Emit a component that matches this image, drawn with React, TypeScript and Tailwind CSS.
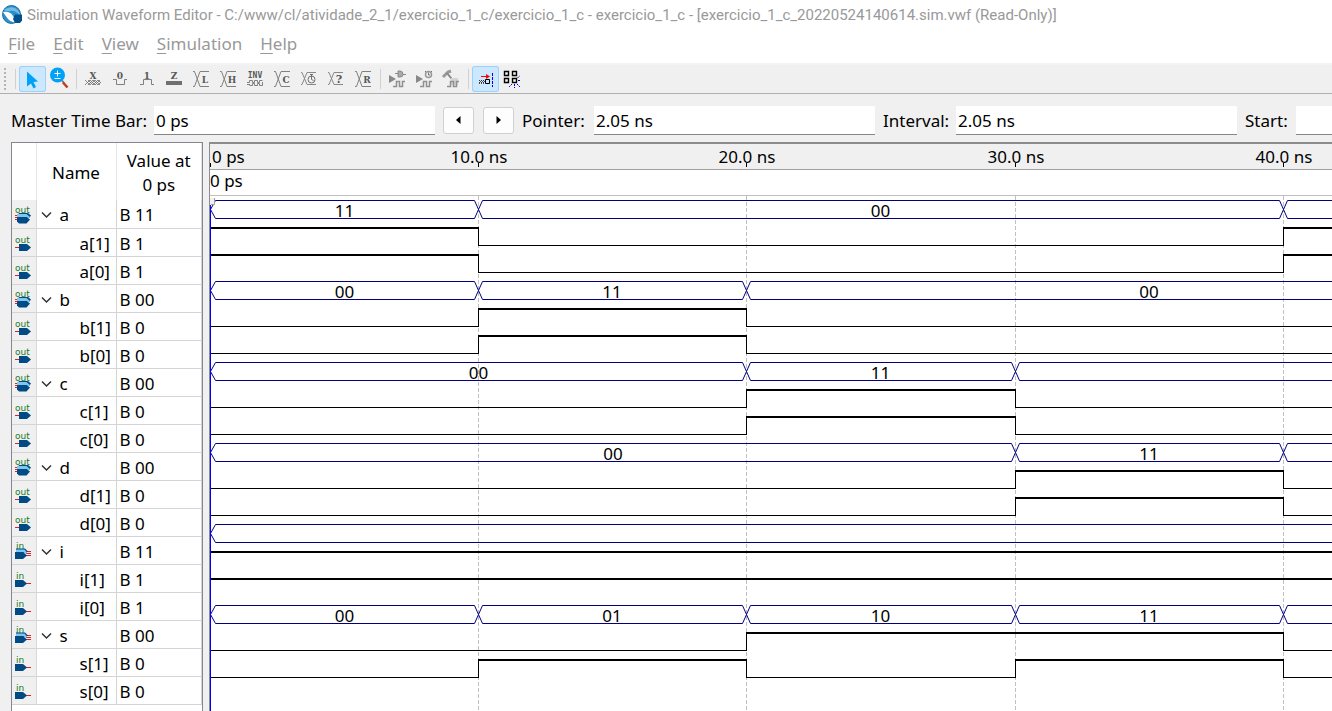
import type { ReactNode } from "react";

type Kind = "out-bus" | "out" | "in-bus" | "in";

type Segment = { to: number; value: string };

type Signal = {
  name: string;
  value: string;
  kind: Kind;
  segments: Segment[];
};

// Pixel position of every 10 ns mark, counted from the left edge of the canvas.
const MARKS = [1, 268, 536, 805, 1073];
const END = 4000;

const SIGNALS: Signal[] = [
  { name: "a", value: "B 11", kind: "out-bus", segments: [{ to: 268, value: "11" }, { to: 1073, value: "00" }, { to: END, value: "11" }] },
  { name: "a[1]", value: "B 1", kind: "out", segments: [{ to: 268, value: "1" }, { to: 1073, value: "0" }, { to: END, value: "1" }] },
  { name: "a[0]", value: "B 1", kind: "out", segments: [{ to: 268, value: "1" }, { to: 1073, value: "0" }, { to: END, value: "1" }] },
  { name: "b", value: "B 00", kind: "out-bus", segments: [{ to: 268, value: "00" }, { to: 536, value: "11" }, { to: 1342, value: "00" }, { to: END, value: "11" }] },
  { name: "b[1]", value: "B 0", kind: "out", segments: [{ to: 268, value: "0" }, { to: 536, value: "1" }, { to: END, value: "0" }] },
  { name: "b[0]", value: "B 0", kind: "out", segments: [{ to: 268, value: "0" }, { to: 536, value: "1" }, { to: END, value: "0" }] },
  { name: "c", value: "B 00", kind: "out-bus", segments: [{ to: 536, value: "00" }, { to: 805, value: "11" }, { to: END, value: "00" }] },
  { name: "c[1]", value: "B 0", kind: "out", segments: [{ to: 536, value: "0" }, { to: 805, value: "1" }, { to: END, value: "0" }] },
  { name: "c[0]", value: "B 0", kind: "out", segments: [{ to: 536, value: "0" }, { to: 805, value: "1" }, { to: END, value: "0" }] },
  { name: "d", value: "B 00", kind: "out-bus", segments: [{ to: 805, value: "00" }, { to: 1073, value: "11" }, { to: END, value: "00" }] },
  { name: "d[1]", value: "B 0", kind: "out", segments: [{ to: 805, value: "0" }, { to: 1073, value: "1" }, { to: END, value: "0" }] },
  { name: "d[0]", value: "B 0", kind: "out", segments: [{ to: 805, value: "0" }, { to: 1073, value: "1" }, { to: END, value: "0" }] },
  { name: "i", value: "B 11", kind: "in-bus", segments: [{ to: END, value: "11" }] },
  { name: "i[1]", value: "B 1", kind: "in", segments: [{ to: END, value: "1" }] },
  { name: "i[0]", value: "B 1", kind: "in", segments: [{ to: END, value: "1" }] },
  { name: "s", value: "B 00", kind: "in-bus", segments: [{ to: 268, value: "00" }, { to: 536, value: "01" }, { to: 805, value: "10" }, { to: 1073, value: "11" }, { to: END, value: "00" }] },
  { name: "s[1]", value: "B 0", kind: "in", segments: [{ to: 536, value: "0" }, { to: 1073, value: "1" }, { to: END, value: "0" }] },
  { name: "s[0]", value: "B 0", kind: "in", segments: [{ to: 268, value: "0" }, { to: 536, value: "1" }, { to: 805, value: "0" }, { to: 1073, value: "1" }, { to: END, value: "0" }] },
];

function BusWave({ segments, top }: { segments: Segment[]; top: number }) {
  const bottom = top + 18;
  const middle = top + 9;
  let from = 1;
  return (
    <g>
      {segments.map((segment, index) => {
        const start = from;
        from = segment.to;
        const left = index === 0 ? start - 1 : start;
        const shape = `M${left + 0.5} ${middle + 0.5}L${start + 4.5} ${top + 0.5}H${segment.to - 3.5}L${segment.to + 0.5} ${middle + 0.5}L${segment.to - 3.5} ${bottom + 0.5}H${start + 4.5}Z`;
        return (
          <g key={segment.to}>
            <path d={shape} fill="none" stroke="#000080" strokeWidth="1" />
            {segment.to !== END && (
              <text x={(start + segment.to) / 2} y={top + 17} textAnchor="middle" fontSize="17" fill="#000">
                {segment.value}
              </text>
            )}
          </g>
        );
      })}
    </g>
  );
}

function BitWave({ segments, top }: { segments: Segment[]; top: number }) {
  let from = 0;
  return (
    <g shapeRendering="crispEdges" fill="#000">
      {segments.map((segment, index) => {
        const start = from;
        from = segment.to;
        const high = segment.value === "1";
        return (
          <g key={segment.to}>
            <rect x={start} y={high ? top : top + 18} width={segment.to - start + 1} height={high ? 2 : 1} />
            {index > 0 && <rect x={start} y={top} width="1" height="19" />}
          </g>
        );
      })}
    </g>
  );
}

function WaveCanvas() {
  return (
    <svg className="block h-[520px] w-full" role="img" aria-label="Signal waveforms">
      {MARKS.slice(1).map((x) => (
        <path key={x} d={`M${x + 0.5} 0V520`} stroke="#c0c0c0" strokeDasharray="4 2" />
      ))}
      {SIGNALS.map((signal, row) =>
        signal.kind.endsWith("bus") ? (
          <BusWave key={signal.name} segments={signal.segments} top={4 + row * 27} />
        ) : (
          <BitWave key={signal.name} segments={signal.segments} top={4 + row * 27} />
        ),
      )}
      <rect x="0" y="8" width="1" height="512" fill="#0000ff" />
      <path d="M0 2h5v7h-5z" fill="#f0f0f0" />
      <path d="M4.500 2V8.500H1" fill="none" stroke="#a0a0a0" />
    </svg>
  );
}

function PinIcon({ kind }: { kind: Kind }) {
  const label = kind.startsWith("out") ? "out" : "in";
  const bus = kind.endsWith("bus");
  return (
    <svg className="block" width="18" height="20" viewBox="0 0 18 20" aria-hidden="true">
      <text x={label === "out" ? 0 : 1} y={bus ? 8 : 10} fontSize="9" fontFamily="DejaVu Sans, sans-serif" fill="#207820">
        {label}
      </text>
      {kind === "out" && (
        <>
          <path d="M0 14.500H5" stroke="#e02020" />
          <path d="M4 11H12L16 14.500L12 18H4Z" fill="#004a86" />
        </>
      )}
      {kind === "out-bus" && (
        <>
          <path d="M0 10.500H4M0 12.500H4M0 14.500H4" stroke="#e02020" />
          <path d="M4 8H13L16 10.500L14 13H3V10Z" fill="#004a86" />
          <path d="M2 9H11.500L15 12L13.500 13.500L11.500 12H2Z" fill="#7cc8f0" />
          <path d="M3 12H11.500L15 14.500L11.500 18.500H4L2 16.500V13Z" fill="#004a86" />
        </>
      )}
      {kind === "in" && (
        <>
          <path d="M11 14.500H16" stroke="#e02020" />
          <path d="M0 11H8L12 14.500L8 18H0Z" fill="#004a86" />
        </>
      )}
      {kind === "in-bus" && (
        <>
          <path d="M11 10.500H16M11 12.500H16M11 14.500H16" stroke="#e02020" />
          <path d="M1 7.500H10L13 10.500L11 12H1Z" fill="#004a86" />
          <path d="M1 8.500H9.500L12 11.500L11 13L8 11H1Z" fill="#7cc8f0" />
          <path d="M0 11H8L12 14.500L8 18H0Z" fill="#004a86" />
        </>
      )}
    </svg>
  );
}

function Chevron() {
  return (
    <svg width="11" height="8" viewBox="0 0 11 8" aria-hidden="true">
      <path d="M1 1.500L5.500 6L10 1.500" fill="none" stroke="#333" strokeWidth="1.500" />
    </svg>
  );
}

function ToolButton({ label, active = false, children }: { label: string; active?: boolean; children: ReactNode }) {
  return (
    <button
      type="button"
      aria-label={label}
      className={
        active
          ? "h-[26px] w-[27px] shrink-0 rounded-[3px] bg-[#cce8ff] ring-1 ring-inset ring-[#99d1ff]"
          : "h-[26px] w-[27px] shrink-0"
      }
    >
      <svg className="block" width="27" height="26" viewBox="0 0 27 26" aria-hidden="true">
        {children}
      </svg>
    </button>
  );
}

function ToolDivider() {
  return (
    <div className="flex h-5 w-[7px] shrink-0 justify-center">
      <div className="w-px bg-[#d0d0d0]" />
    </div>
  );
}

function Letter({ x = 13, y = 13, size = 9, children }: { x?: number; y?: number; size?: number; children: string }) {
  return (
    <text x={x} y={y} textAnchor="middle" fontSize={size} fontWeight="700" fontFamily="DejaVu Serif, serif" fill="#585858">
      {children}
    </text>
  );
}

function Cross({ children }: { children: ReactNode }) {
  return (
    <>
      <path d="M5 5.500H6.500L12 20.500H21M5 20.500H6.500L12 5.500H21" fill="none" stroke="#808080" />
      {children}
    </>
  );
}

function StepWave({ x, y }: { x: number; y: number }) {
  return (
    <path
      transform={`translate(${x} ${y})`}
      d="M0 5.500H3.500V.5H6.500V5.500H9.500V.5H12"
      fill="none"
      stroke="#909090"
      strokeWidth="1.500"
    />
  );
}

function Toolbar() {
  return (
    <div role="toolbar" aria-label="Waveform tools" className="flex h-[31px] items-center overflow-hidden border-t-2 border-b border-t-[#f3f3f3] border-b-[#b0b0b0] bg-[#f0f0f0]">
      <div className="flex w-3 shrink-0 pl-1">
        <svg width="3" height="23" viewBox="0 0 3 23" aria-hidden="true">
          <path d="M1 0V23" stroke="#b4b4b4" strokeWidth="2" strokeDasharray="2 2" />
        </svg>
      </div>
      <ToolDivider />
      <ToolButton label="Selection tool" active>
        <path d="M8 5.500L19 15.500L14.500 16L17 21L14.500 22.500L12 17.500L8 20.500Z" fill="#00a2f8" />
      </ToolButton>
      <ToolButton label="Zoom tool">
        <path d="M16 14.500L18 17" stroke="#777" strokeWidth="2" />
        <path d="M17 16.500L21.500 21.500" stroke="#c53c1c" strokeWidth="2.500" />
        <circle cx="11.500" cy="9" r="7.500" fill="#00a2f8" />
        <path d="M8.500 7.500H14.500M11.500 4.500V10.500M8.500 12.500H14.500" stroke="#fff" />
      </ToolButton>
      <ToolDivider />
      <ToolButton label="Forcing unknown">
        <Letter>X</Letter>
        <path d="M5 14L10 19L15 14L20 19M5 19L10 14L15 19L20 14M8 19L13 14L18 19L21 16M8 14L13 19L18 14L21 17" fill="none" stroke="#707070" strokeWidth=".8" />
      </ToolButton>
      <ToolButton label="Forcing low">
        <Letter>0</Letter>
        <path d="M6 13.500H9.500V18.500H17.500V13.500H20" fill="none" stroke="#808080" />
      </ToolButton>
      <ToolButton label="Forcing high">
        <Letter>1</Letter>
        <path d="M6 18.500H9.500V13.500H17.500V18.500H20" fill="none" stroke="#808080" />
      </ToolButton>
      <ToolButton label="High impedance">
        <Letter>Z</Letter>
        <path d="M5 15H21V19H5Z" fill="#707070" />
      </ToolButton>
      <ToolButton label="Weak low">
        <Cross><Letter x={17} y={17}>L</Letter></Cross>
      </ToolButton>
      <ToolButton label="Weak high">
        <Cross><Letter x={17} y={17}>H</Letter></Cross>
      </ToolButton>
      <ToolButton label="Invert">
        <text x="13" y="12" textAnchor="middle" fontSize="8" fontWeight="700" fontFamily="DejaVu Sans Mono, monospace" fill="#585858">INV</text>
        <path d="M5 16.500H7.500V14.500H10.500V16.500H12.500V14.500H15.500V16.500H17.500V14.500H20.500M5 18.500H8M7.500 19.500H10.500V17.500H12.500V19.500H15.500V17.500H17.500V19.500H20.500V16" fill="none" stroke="#808080" />
      </ToolButton>
      <ToolButton label="Count value">
        <Cross><Letter x={17} y={17}>C</Letter></Cross>
      </ToolButton>
      <ToolButton label="Overwrite clock">
        <path d="M5 6.500H6L11 18.500H20M5 18.500H6L11 6.500H20" fill="none" stroke="#888" />
        <circle cx="15.500" cy="13.500" r="3.500" fill="#f0f0f0" stroke="#707070" />
        <path d="M14 8.500H17M15.500 8.500V13.500L17.500 14.500" fill="none" stroke="#707070" />
      </ToolButton>
      <ToolButton label="Arbitrary value">
        <path d="M5 6.500H6L11 18.500H20M5 18.500H6L11 6.500H20" fill="none" stroke="#888" />
        <Letter x={16} y={17} size={11}>?</Letter>
      </ToolButton>
      <ToolButton label="Random value">
        <Cross><Letter x={17} y={17}>R</Letter></Cross>
      </ToolButton>
      <ToolDivider />
      <ToolButton label="Run functional simulation">
        <path d="M5 9L12 13L5 17Z" fill="#888" />
        <path d="M11 7.500H14M19 8.500H22M14 5H16Q19 5 19 8.500Q19 11 16 11H14Z" fill="#aaa" stroke="#888" />
        <StepWave x={9} y={15} />
      </ToolButton>
      <ToolButton label="Run timing simulation">
        <path d="M5 9L12 13L5 17Z" fill="#888" />
        <circle cx="17.500" cy="8.500" r="3" fill="#eee" stroke="#999" strokeWidth="1.500" />
        <path d="M17.500 6.500V9H19M14 5L15 6M21 5L20 6" fill="none" stroke="#777" />
        <StepWave x={9} y={15} />
      </ToolButton>
      <ToolButton label="Generate testbench">
        <path d="M5 11L10 6L13 5" fill="none" stroke="#999" strokeWidth="3" />
        <path d="M9 7L17 17" stroke="#888" strokeWidth="2" />
        <path d="M13 12H20V19H13Z" fill="#d4d4d4" />
        <StepWave x={9} y={15} />
      </ToolButton>
      <ToolDivider />
      <ToolButton label="Snap to transition" active>
        <path d="M9 10.500H15" stroke="#f00" />
        <path d="M14 8L18 10.500L14 13Z" fill="#f00" />
        <path d="M7 14.500H13M7 16.500H13" stroke="#333" strokeDasharray="1 1" />
        <path d="M8 15.500H13M7 17.500H13" stroke="#555" strokeDasharray="1 1" />
        <path d="M13.500 13.500H17.500V17.500H13.500Z" fill="none" stroke="#000" />
        <path d="M20.500 7V21" stroke="#00f" strokeDasharray="3 1" />
      </ToolButton>
      <ToolButton label="Snap to grid">
        <path d="M5.500 5.500H9.500V9.500H5.500ZM13.500 5.500H17.500V9.500H13.500ZM5.500 12.500H9.500V16.500H5.500ZM13.500 12.500H17.500V16.500H13.500Z" fill="none" stroke="#000" strokeWidth="1.400" />
        <path d="M15.500 18V22M13 18L10 21M18 18L21 21M18.500 12L21 9.500M19 14.500H22" stroke="#0000d0" strokeDasharray="2 1" />
      </ToolButton>
    </div>
  );
}

const FIELD = "h-[29px] border-b border-b-[#858585] bg-white px-[2px] pt-[2px] text-[17px] leading-6 text-black outline-none";
const STEP_BUTTON = "flex h-[27px] w-[31px] items-center justify-center rounded-[3px] border border-[#d0d0d0] bg-[#fdfdfd]";

function TimeBar() {
  return (
    <div className="flex h-[48px] items-center gap-2 overflow-hidden pt-1 pl-[11px] text-[17px] leading-6">
      <label htmlFor="master" className="w-[135px] shrink-0 pt-[2px] whitespace-nowrap">Master Time Bar:</label>
      <input id="master" className={`${FIELD} w-[281px] shrink-0`} defaultValue="0 ps" />
      <div className="flex shrink-0 gap-[9px]">
        <button type="button" aria-label="Previous transition" className={STEP_BUTTON}>
          <svg width="5" height="8" viewBox="0 0 5 8" aria-hidden="true"><path d="M4.500 0V8L0 4Z" /></svg>
        </button>
        <button type="button" aria-label="Next transition" className={STEP_BUTTON}>
          <svg width="5" height="8" viewBox="0 0 5 8" aria-hidden="true"><path d="M.5 0V8L5 4Z" /></svg>
        </button>
      </div>
      <label htmlFor="pointer" className="w-16 shrink-0 pt-[2px] whitespace-nowrap">Pointer:</label>
      <input id="pointer" className={`${FIELD} w-[281px] shrink-0`} defaultValue="2.05 ns" />
      <label htmlFor="interval" className="w-[65px] shrink-0 pt-[2px] whitespace-nowrap">Interval:</label>
      <input id="interval" className={`${FIELD} w-[281px] shrink-0`} defaultValue="2.05 ns" />
      <label htmlFor="start" className="w-[43px] shrink-0 pt-[2px] whitespace-nowrap">Start:</label>
      <input id="start" className={`${FIELD} min-w-0 flex-1`} defaultValue="" />
    </div>
  );
}

function SignalTable() {
  return (
    <div className="w-[192px] shrink-0 border-x border-t border-[#828790] bg-white">
      <table className="w-full table-fixed border-collapse text-[17px]">
        <colgroup>
          <col className="w-6" />
          <col className="w-20" />
          <col />
        </colgroup>
        <thead>
          <tr className="h-[57px] leading-6">
            <th aria-label="Type" className="border-r border-[#e4e4e4]" />
            <th className="border-r border-[#e4e4e4] p-0 pt-[3px] font-normal">Name</th>
            <th className="border-r border-[#e4e4e4] p-0 pt-[3px] font-normal">Value at<br />0 ps</th>
          </tr>
        </thead>
        <tbody>
          {SIGNALS.map((signal) => {
            const bus = signal.kind.endsWith("bus");
            return (
              <tr key={signal.name} className="h-[28px] border-b border-[#d4d4d4] leading-6">
                <td className="border-r border-[#d8d8d8] bg-[#f0f0f0] p-0 pt-[2px] pl-[3px]"><PinIcon kind={signal.kind} /></td>
                <td className="border-r border-[#d4d4d4] p-0 pt-[3px]">
                  {bus ? (
                    <button type="button" aria-expanded="true" className="flex w-full items-center gap-2 pl-1">
                      <Chevron />
                      <span>{signal.name}</span>
                    </button>
                  ) : (
                    <div className="pl-[43px]">{signal.name}</div>
                  )}
                </td>
                <td className="border-r border-[#d4d4d4] p-0 pt-[3px] pl-[3px]">{signal.value}</td>
              </tr>
            );
          })}
        </tbody>
      </table>
    </div>
  );
}

function Ruler() {
  return (
    <svg className="block h-[26px] w-full border-b border-[#a0a0a0] bg-[#f0f0f0]" role="img" aria-label="Time ruler in nanoseconds">
      {MARKS.map((x, index) => (
        <g key={x}>
          <text x={index === 0 ? 2 : x + 1} y="19" textAnchor={index === 0 ? "start" : "middle"} fontSize="17">
            {index === 0 ? "0 ps" : `${index * 10}.0 ns`}
          </text>
          <path d={`M${index === 0 ? 0.5 : x + 0.5} 19V23`} stroke="#000" />
        </g>
      ))}
    </svg>
  );
}

function AppLogo() {
  return (
    <svg width="20" height="20" viewBox="0 0 20 20" aria-hidden="true">
      <circle cx="9.500" cy="9.500" r="9" fill="#2d8fc8" stroke="#1670aa" />
      <path d="M2 5Q7 1 13 3Q18 6 18 11Q14 5 8 6Q4 7 2 5Z" fill="#70bce6" />
      <path d="M1 7Q8 6 11 11Q13 15 16 16Q10 19 6 14Q3 10 1 7Z" fill="#fff" />
      <path d="M13 9.500H20V15.500L18 18H13L11 14Z" fill="#00518c" />
    </svg>
  );
}

const MENU = ["File", "Edit", "View", "Simulation", "Help"];

export default function App() {
  return (
    <div className="flex h-screen flex-col overflow-hidden bg-[#f0f0f0] font-['Noto_Sans',sans-serif] text-black">
      <header className="bg-white text-[#999]">
        <div className="flex h-[29px] items-center gap-[5px] overflow-hidden pl-[2px]">
          <AppLogo />
          <h1 className="font-[Roboto,sans-serif] text-[15px] leading-5 whitespace-nowrap">
            Simulation Waveform Editor - C:/www/cl/atividade_2_1/exercicio_1_c/exercicio_1_c - exercicio_1_c - [exercicio_1_c_20220524140614.sim.vwf (Read-Only)]
          </h1>
        </div>
        <nav className="flex h-[34px] items-start gap-[18px] pt-[3px] pl-2 text-[17px] leading-6">
          {MENU.map((item) => (
            <button key={item} type="button">
              <span className="underline underline-offset-3">{item[0]}</span>
              {item.slice(1)}
            </button>
          ))}
        </nav>
      </header>
      <Toolbar />
      <TimeBar />
      <main className="flex min-h-0 flex-1 gap-[6px] overflow-hidden pl-[11px]">
        <SignalTable />
        <section className="min-w-0 flex-1 border-t-2 border-l border-[#8c8c90] bg-white">
          <Ruler />
          <div className="h-[26px] border-b border-[#c0c0c0] text-[17px] leading-[22px]">0 ps</div>
          <WaveCanvas />
        </section>
      </main>
    </div>
  );
}
